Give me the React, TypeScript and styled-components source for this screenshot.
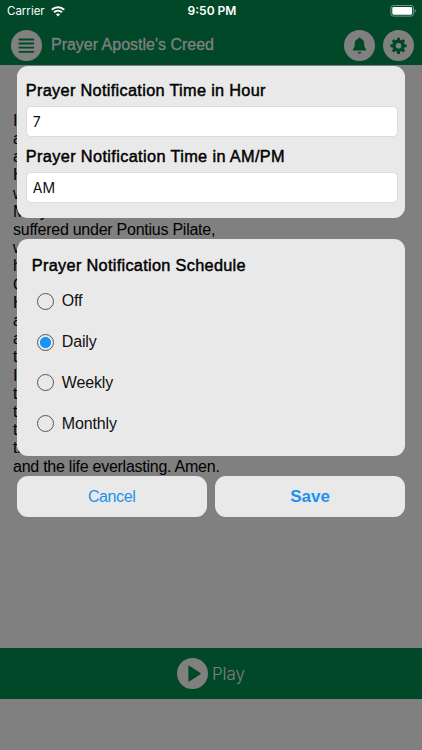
import React, { useState } from "react";
import styled, { createGlobalStyle } from "styled-components";

const GlobalStyle = createGlobalStyle`
  * { box-sizing: border-box; }
  body { margin: 0; background: #808080; font-family: "Liberation Sans", Arial, sans-serif; }
  button, input { font-family: inherit; }
`;

const green = "#004828";

const Screen = styled.div`
  position: relative;
  width: 422px;
  height: 750px;
  overflow: hidden;
  display: flex;
  flex-direction: column;
  background: #808080;
`;

const Header = styled.header`
  height: 65px;
  flex: none;
  display: flex;
  align-items: flex-start;
  padding: 29.5px 8.5px 0 10.5px;
  background: ${green};
  color: #808080;
`;

const RoundButton = styled.button`
  width: 31px;
  height: 31px;
  flex: none;
  padding: 0;
  border: 0;
  border-radius: 50%;
  background: #808080;
  color: ${green};
  svg { display: block; }
`;

const HeaderTitle = styled.h1`
  flex: 1;
  margin: 0 0 0 9.5px;
  font-size: 16px;
  font-weight: 400;
  line-height: 30px;
  letter-spacing: -0.01px;
  white-space: nowrap;
  -webkit-text-stroke: 0.3px currentColor;
`;

const HeaderActions = styled.div`
  display: flex;
  gap: 8px;
`;

const Creed = styled.main`
  flex: 1;
  padding: 46.8px 13px 0;
  font-size: 16px;
  line-height: 18.2px;
  letter-spacing: -0.25px;
  color: #000;
  white-space: nowrap;
`;

const PlayBar = styled.footer`
  height: 51px;
  flex: none;
  margin-bottom: 51px;
  display: flex;
  align-items: center;
  justify-content: center;
  gap: 4px;
  background: ${green};
  color: #808080;
`;

const PlayLabel = styled.span`
  font-family: Inter, sans-serif;
  font-size: 17px;
  font-weight: 300;
`;

const Overlay = styled.div`
  position: absolute;
  inset: 0;
  display: flex;
  flex-direction: column;
`;

const StatusBar = styled.div`
  height: 22px;
  flex: none;
  display: grid;
  grid-template-columns: 1fr auto 1fr;
  align-items: center;
  padding: 0 5px 0 7px;
  color: #fff;
  font: 400 11.5px/22px Inter, sans-serif;
`;

const Carrier = styled.span`
  display: flex;
  align-items: center;
  gap: 6px;
`;

const Clock = styled.span`
  font-weight: 600;
  font-size: 12px;
`;

const BatteryIcon = styled.svg`
  justify-self: end;
`;

const Dialog = styled.form`
  margin: 43.5px 16.8px 0 16.5px;
  display: flex;
  flex-direction: column;
`;

const Card = styled.section<{ $height: number; $pad: string }>`
  height: ${(p) => p.$height}px;
  margin-bottom: 20.5px;
  padding: ${(p) => p.$pad};
  border-radius: 11px;
  background: #e9e9e9;
`;

const Heading = styled.label<{ $spacing?: number }>`
  display: block;
  height: 30px;
  font-size: 16.3px;
  line-height: 30px;
  letter-spacing: ${(p) => p.$spacing ?? 0.31}px;
  color: #000;
  white-space: nowrap;
  -webkit-text-stroke: 0.45px currentColor;
`;

const Field = styled.input`
  display: block;
  width: 100%;
  height: 31px;
  margin: 1px 0 3.5px;
  padding: 0 6px;
  border: 1px solid #dcdcdc;
  border-radius: 5px;
  outline: 0;
  background: #fff;
  color: #111;
  font: 400 14px/29px Inter, sans-serif;
`;

const Options = styled.div`
  padding: 1px 0 0 5px;
`;

const Option = styled.label`
  height: 40.7px;
  display: flex;
  align-items: center;
  gap: 8px;
  font-size: 16px;
  letter-spacing: -0.15px;
  color: #111;
`;

const Radio = styled.input`
  appearance: none;
  width: 17px;
  height: 17px;
  margin: 0;
  border: 1px solid #555;
  border-radius: 50%;
  &:checked {
    background: radial-gradient(circle, #1893fa 5.2px, #e9e9e9 5.9px);
  }
`;

const Buttons = styled.div`
  display: grid;
  grid-template-columns: 1fr 1fr;
  gap: 8px;
`;

const ActionButton = styled.button<{ $strong?: boolean }>`
  height: 41px;
  padding: 0;
  border: 0;
  border-radius: 11px;
  background: #e9e9e9;
  color: #1c91ee;
  font-size: ${(p) => (p.$strong ? 17 : 16)}px;
  font-weight: ${(p) => (p.$strong ? 700 : 400)};
  letter-spacing: ${(p) => (p.$strong ? 0 : -0.4)}px;
`;

const creedLines = [
  "I believe in God, the Father",
  "almighty, creator of heaven",
  "and earth. I believe in Jesus Christ,",
  "His only Son, our Lord,",
  "who was conceived by the",
  "Mary",
  "suffered under Pontius Pilate,",
  "was crucified, died, and was",
  "he descended into hell.",
  "On the third day",
  "He ascended into heaven",
  "and is seated at the right hand of",
  "almighty. He will come",
  "to judge the living and the dead.",
  "I believe in the Holy Spirit,",
  "the holy catholic Church,",
  "the communion of saints,",
  "the forgiveness of sins,",
  "the resurrection of the body,",
  "and the life everlasting. Amen.",
];

const MenuIcon = () => (
  <svg width="31" height="31" viewBox="0 0 31 31" stroke="currentColor" strokeWidth="1.8" strokeLinecap="round">
    <path d="M8.3 9.5H22.3M8.3 13.5H22.3M8.3 17.6H22.3M8.3 21.8H22.3" />
  </svg>
);

const BellIcon = () => (
  <svg width="31" height="31" viewBox="0 0 31 31" fill="currentColor">
    <path d="M15.5 7.4c.8 0 1.3.6 1.3 1.3 2.4.7 3.3 2.4 3.4 4.6.1 3.4.6 4.7 1.9 5.9v1.2H8.9v-1.2c1.3-1.2 1.8-2.5 1.9-5.9.1-2.2 1-3.9 3.4-4.6 0-.7.5-1.3 1.3-1.3zM13.7 21.9h3.6c-.2 1.1-.9 1.7-1.8 1.7s-1.6-.6-1.8-1.7z" />
  </svg>
);

const GearIcon = () => (
  <svg width="31" height="31" viewBox="0 0 31 31" fill="none" stroke="currentColor">
    <circle cx="15.5" cy="15.8" r="4.5" strokeWidth="3.4" />
    <path
      strokeWidth="3"
      d="M15.5 7.7v3M15.5 20.9v3M7.4 15.8h3M20.6 15.8h3M9.8 10.1l2 2M19.2 19.5l2 2M21.2 10.1l-2 2M11.8 19.5l-2 2"
    />
  </svg>
);

const PlayIcon = () => (
  <svg width="31" height="31" viewBox="0 0 31 31" fill="currentColor">
    <path d="M11.4 8v15.2c0 .5.4.6.8.3l11.3-7.3c.4-.3.4-.8 0-1.1L12.2 7.7c-.4-.3-.8-.2-.8.3z" />
  </svg>
);

const WifiIcon = () => (
  <svg width="14" height="11" viewBox="0 0 14 11" fill="none" stroke="#fff" strokeWidth="2">
    <path d="M.8 3.8c3.5-3.3 8.9-3.3 12.4 0M3.1 6.3c2.2-2.1 5.6-2.1 7.8 0" />
    <path d="M4.9 8.2c1.2-1.1 3-1.1 4.2 0L7 10.4z" fill="#fff" stroke="none" />
  </svg>
);

const schedules = ["Off", "Daily", "Weekly", "Monthly"];

export default function App() {
  const [schedule, setSchedule] = useState("Daily");
  return (
    <>
      <GlobalStyle />
      <Screen>
        <Header>
          <RoundButton aria-label="Menu"><MenuIcon /></RoundButton>
          <HeaderTitle>Prayer Apostle's Creed</HeaderTitle>
          <HeaderActions>
            <RoundButton aria-label="Notifications"><BellIcon /></RoundButton>
            <RoundButton aria-label="Settings"><GearIcon /></RoundButton>
          </HeaderActions>
        </Header>
        <Creed>
          {creedLines.map((line) => <div key={line}>{line}</div>)}
        </Creed>
        <PlayBar>
          <RoundButton aria-label="Play"><PlayIcon /></RoundButton>
          <PlayLabel>Play</PlayLabel>
        </PlayBar>
        <Overlay>
          <StatusBar>
            <Carrier>Carrier <WifiIcon /></Carrier>
            <Clock>9:50 PM</Clock>
            <BatteryIcon width="27" height="12" viewBox="0 0 27 12">
              <rect x=".9" y=".5" width="22.6" height="10.6" rx="2.4" fill="none" stroke="#6f9c88" />
              <rect x="2.3" y="1.9" width="19.8" height="7.8" rx="1.1" fill="#fff" />
              <path d="M24.8 4v3.6c1.5-.4 1.5-3.2 0-3.6z" fill="#6f9c88" />
            </BatteryIcon>
          </StatusBar>
          <Dialog onSubmit={(e) => e.preventDefault()}>
            <Card $height={152.5} $pad="9.5px 7.6px 0 9.3px">
              <Heading htmlFor="hour" $spacing={0.32}>Prayer Notification Time in Hour</Heading>
              <Field id="hour" defaultValue="7" />
              <Heading htmlFor="period" $spacing={0.37}>Prayer Notification Time in AM/PM</Heading>
              <Field id="period" defaultValue="AM" />
            </Card>
            <Card $height={217} $pad="11.6px 15px 0 15.3px">
              <Heading as="div">Prayer Notification Schedule</Heading>
              <Options>
                {schedules.map((name) => (
                  <Option key={name}>
                    <Radio type="radio" name="schedule" checked={schedule === name} onChange={() => setSchedule(name)} />
                    {name}
                  </Option>
                ))}
              </Options>
            </Card>
            <Buttons>
              <ActionButton type="button">Cancel</ActionButton>
              <ActionButton type="submit" $strong>Save</ActionButton>
            </Buttons>
          </Dialog>
        </Overlay>
      </Screen>
    </>
  );
}
